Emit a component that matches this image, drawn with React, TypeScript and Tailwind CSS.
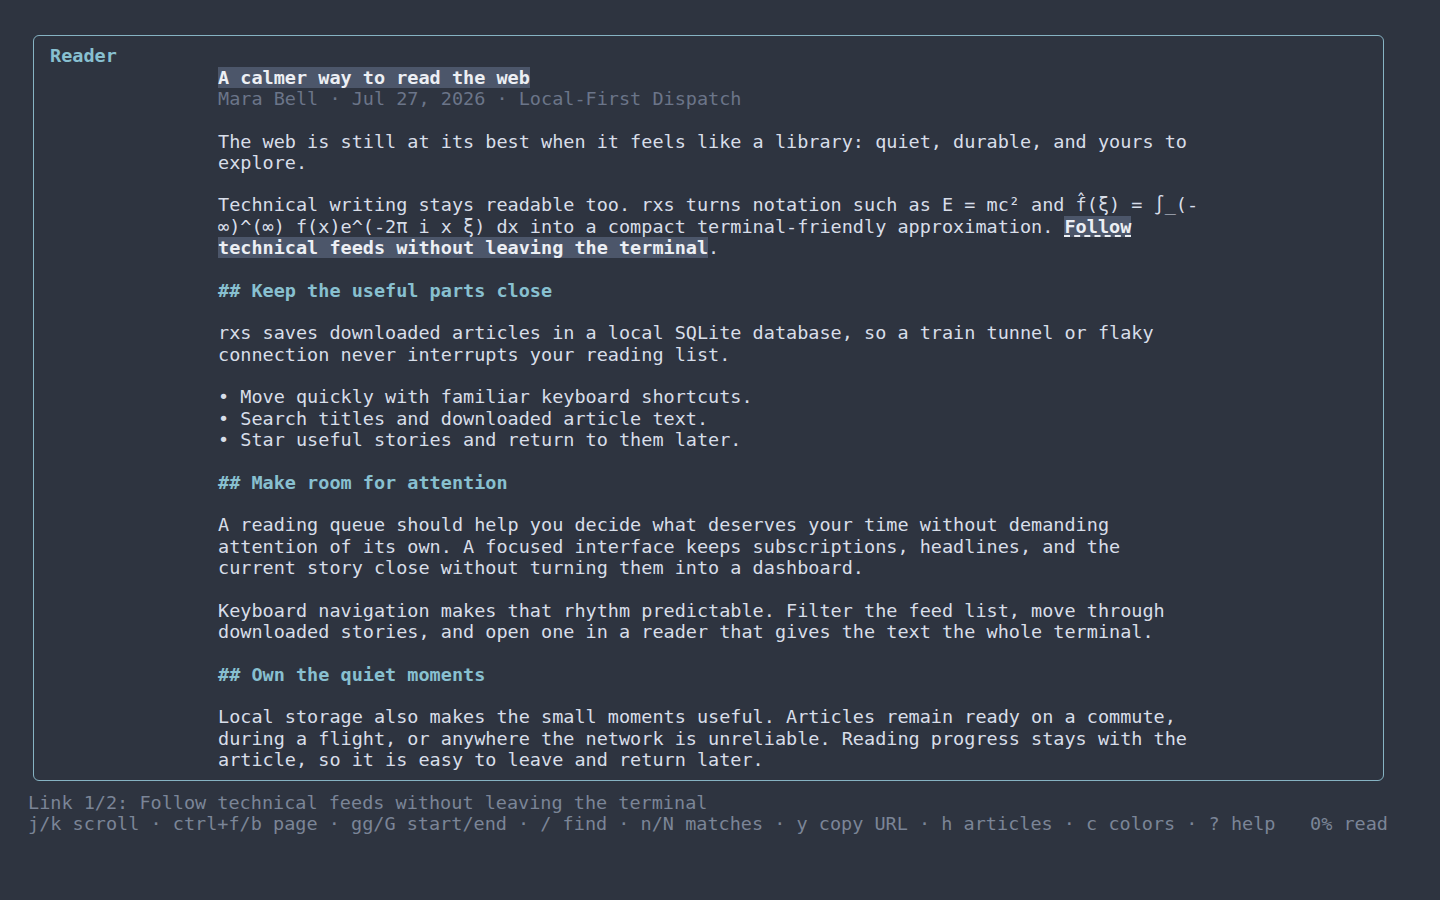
import type { ReactNode } from "react"

const Row = ({ children }: { children?: ReactNode }) => (
  <div className="h-[21.33px] whitespace-pre">{children ?? " "}</div>
)

const H = ({ children }: { children: ReactNode }) => (
  <Row>
    <span className="font-bold text-[#88c0d0]">{children}</span>
  </Row>
)

const Link = ({ children, cursor }: { children: ReactNode; cursor?: boolean }) => (
  <span
    className={
      cursor
        ? "bg-[#4c566a] font-bold text-[#eceff4] underline decoration-dashed underline-offset-[3px]"
        : "bg-[#4c566a] font-bold text-[#eceff4]"
    }
  >
    {children}
  </span>
)

export default function App() {
  return (
    <div
      className="min-h-screen bg-[#2e3440] pl-[28px] pt-[35px] text-[18.5px] leading-[21.33px] text-[#d8dee9]"
      style={{ fontFamily: '"DejaVu Sans Mono", "Liberation Mono", monospace' }}
    >
      <div className="ml-[5px] h-[746px] w-[1351px] rounded-[6px] border border-[#86b3c3] pl-[16px] pt-[9.2px]">
        <Row>
          <span className="font-bold text-[#88c0d0]">Reader</span>
        </Row>
        <div className="ml-[168px]">
          <Row>
            <span className="bg-[#4c566a] font-bold text-[#eceff4]">A calmer way to read the web</span>
          </Row>
          <Row>
            <span className="text-[#6b7589]">Mara Bell · Jul 27, 2026 · Local-First Dispatch</span>
          </Row>
          <Row />
          <Row>The web is still at its best when it feels like a library: quiet, durable, and yours to</Row>
          <Row>explore.</Row>
          <Row />
          <Row>Technical writing stays readable too. rxs turns notation such as E = mc² and f̂(ξ) = ∫_(-</Row>
          <Row>
            ∞)^(∞) f(x)e^(-2π i x ξ) dx into a compact terminal-friendly approximation. <Link cursor>Follow</Link>
          </Row>
          <Row>
            <Link>technical feeds without leaving the terminal</Link>.
          </Row>
          <Row />
          <H>## Keep the useful parts close</H>
          <Row />
          <Row>rxs saves downloaded articles in a local SQLite database, so a train tunnel or flaky</Row>
          <Row>connection never interrupts your reading list.</Row>
          <Row />
          <Row>• Move quickly with familiar keyboard shortcuts.</Row>
          <Row>• Search titles and downloaded article text.</Row>
          <Row>• Star useful stories and return to them later.</Row>
          <Row />
          <H>## Make room for attention</H>
          <Row />
          <Row>A reading queue should help you decide what deserves your time without demanding</Row>
          <Row>attention of its own. A focused interface keeps subscriptions, headlines, and the</Row>
          <Row>current story close without turning them into a dashboard.</Row>
          <Row />
          <Row>Keyboard navigation makes that rhythm predictable. Filter the feed list, move through</Row>
          <Row>downloaded stories, and open one in a reader that gives the text the whole terminal.</Row>
          <Row />
          <H>## Own the quiet moments</H>
          <Row />
          <Row>Local storage also makes the small moments useful. Articles remain ready on a commute,</Row>
          <Row>during a flight, or anywhere the network is unreliable. Reading progress stays with the</Row>
          <Row>article, so it is easy to leave and return later.</Row>
        </div>
      </div>
      <div className="mt-[10.5px] w-[1360px] text-[#7b8597]">
        <Row>Link 1/2: Follow technical feeds without leaving the terminal</Row>
        <div className="flex h-[21.33px] justify-between whitespace-pre">
          <span>j/k scroll · ctrl+f/b page · gg/G start/end · / find · n/N matches · y copy URL · h articles · c colors · ? help</span>
          <span>0% read</span>
        </div>
      </div>
    </div>
  )
}
